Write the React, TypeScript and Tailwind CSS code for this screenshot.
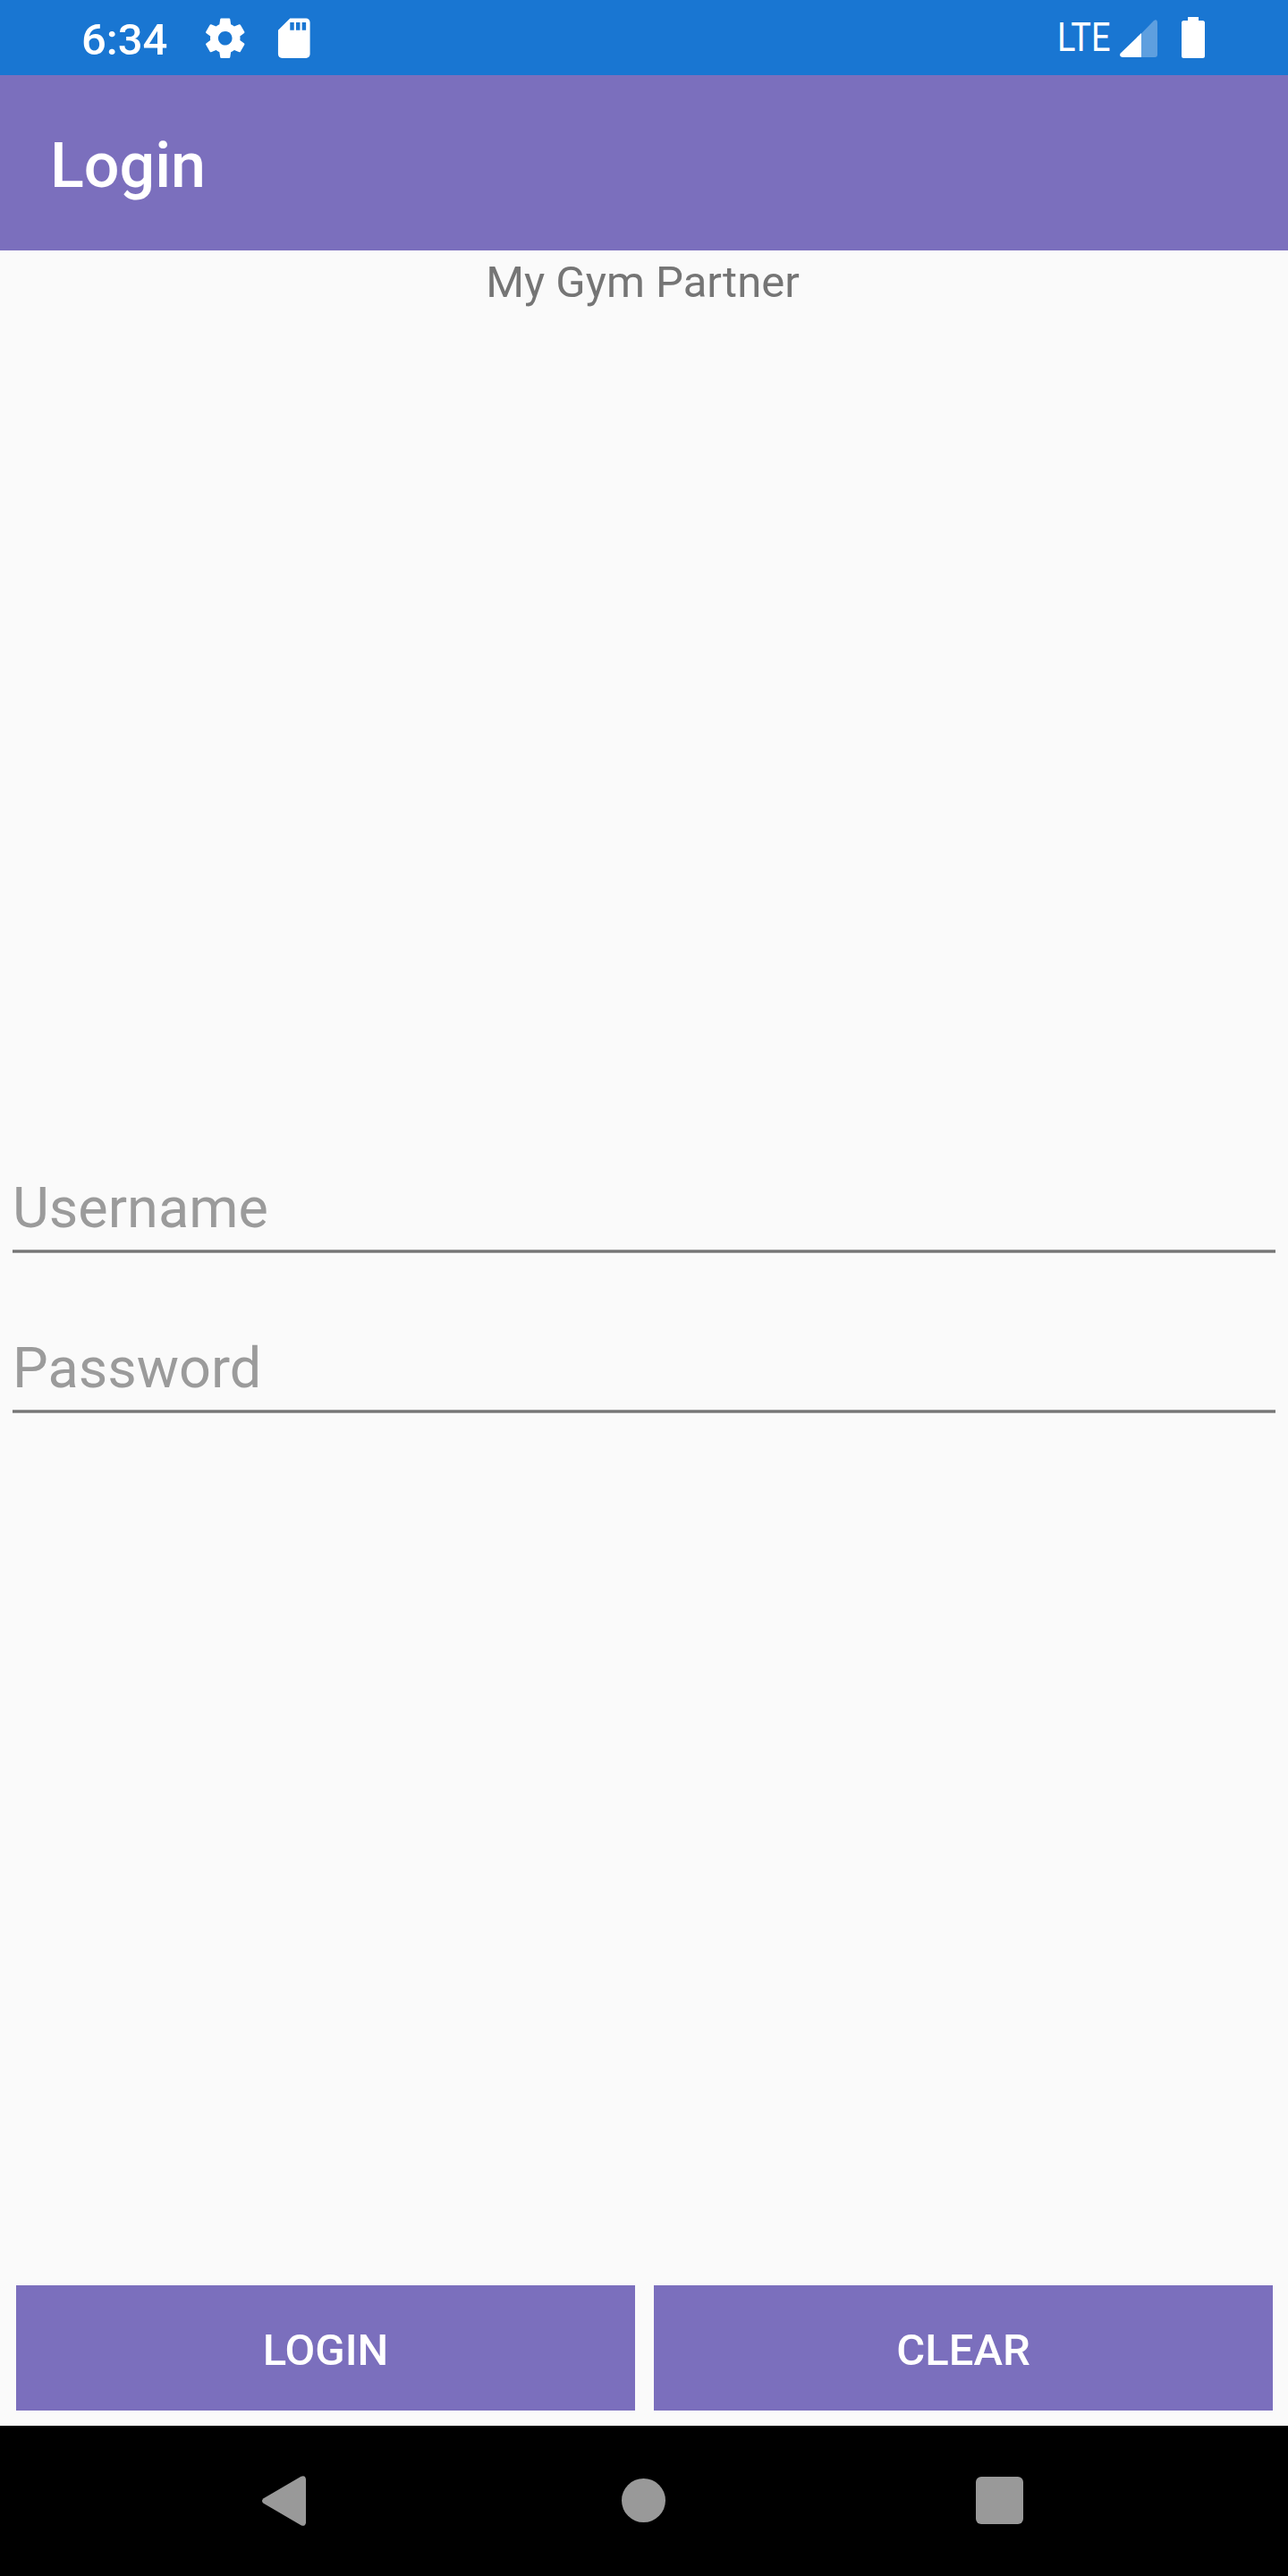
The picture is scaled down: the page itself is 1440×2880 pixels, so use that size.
import React from "react";

function StatusBar() {
  return (
    <div className="flex h-[84px] shrink-0 items-start bg-[#1976d2] text-white">
      <span className="ml-[91px] mt-[16px] w-[100px] whitespace-nowrap text-[49px] font-medium leading-[58px]">
        6:34
      </span>
      <svg className="ml-[33.5px] mt-[15.5px] h-[53.5px] w-[53.5px]" viewBox="0 0 24 24" fill="currentColor">
        <path d="M19.43 12.98c.04-.32.07-.64.07-.98s-.03-.66-.07-.98l2.11-1.65c.19-.15.24-.42.12-.64l-2-3.46c-.12-.22-.39-.3-.61-.22l-2.49 1c-.52-.4-1.08-.73-1.69-.98l-.38-2.65C14.46 2.18 14.25 2 14 2h-4c-.25 0-.46.18-.49.42l-.38 2.65c-.61.25-1.17.59-1.69.98l-2.49-1c-.23-.09-.49 0-.61.22l-2 3.46c-.13.22-.07.49.12.64l2.11 1.65c-.04.32-.07.65-.07.98s.03.66.07.98l-2.11 1.65c-.19.15-.24.42-.12.64l2 3.46c.12.22.39.3.61.22l2.49-1c.52.4 1.08.73 1.69.98l.38 2.65c.03.24.24.42.49.42h4c.25 0 .46-.18.49-.42l.38-2.65c.61-.25 1.17-.59 1.69-.98l2.49 1c.23.09.49 0 .61-.22l2-3.46c.12-.22.07-.49-.12-.64l-2.11-1.65zM12 15.5c-1.93 0-3.5-1.57-3.5-3.5s1.57-3.5 3.5-3.5 3.5 1.57 3.5 3.5-1.57 3.5-3.5 3.5z" />
      </svg>
      <svg className="ml-[23.5px] mt-[15.5px] h-[53.5px] w-[53.5px]" viewBox="0 0 24 24" fill="currentColor">
        <path d="M18 2h-8L4.02 8 4 20c0 1.1.9 2 2 2h12c1.1 0 2-.9 2-2V4c0-1.1-.9-2-2-2zm-6 6h-2V4h2v4zm3 0h-2V4h2v4zm3 0h-2V4h2v4z" />
      </svg>
      <div className="ml-auto mr-[93px] flex items-start">
        <span className="mt-[16px] w-[70px] origin-left scale-x-[0.86] whitespace-nowrap text-[44px] leading-[52px]">
          LTE
        </span>
        <svg className="mt-[22px] h-[42px] w-[42px]" viewBox="0 0 42 42" fill="currentColor">
          <path d="M24 15.5 37.8 1.2Q42-1.4 42 4V39Q42 42 39 42H24Z" opacity="0.3" />
          <path d="M24 15V42H3Q-1.4 41.2.8 37.6Z" />
        </svg>
        <svg className="ml-[27px] mt-[19px] h-[46px] w-[26px]" viewBox="0 0 26 46" fill="currentColor">
          <path d="M7 0H19V4H23.5Q26 4 26 6.5V43.5Q26 46 23.5 46H2.5Q0 46 0 43.5V6.5Q0 4 2.5 4H7Z" />
        </svg>
      </div>
    </div>
  );
}

function Field({ label, type }: { label: string; type: string }) {
  return (
    <div className="flex h-[179px] flex-col justify-end px-[14px]">
      <input
        type={type}
        placeholder={label}
        aria-label={label}
        className="mb-[9px] block h-[74px] w-full bg-transparent p-0 text-[63px] leading-[74px] outline-none placeholder:text-[#9b9b9b]"
      />
      <div className="h-[4px] border-y border-[#9d9d9d] bg-[#757575]" />
    </div>
  );
}

function ActionButton({ children }: { children: React.ReactNode }) {
  return (
    <button className="h-[140px] w-[692px] bg-[#7b6fbd] pt-[5px] text-[49px] font-medium leading-[58px] text-white">
      {children}
    </button>
  );
}

function NavigationBar() {
  return (
    <nav className="flex h-[168px] shrink-0 items-start bg-black text-[#999999]">
      <svg className="ml-[293px] mt-[56px] h-[56px] w-[49px]" viewBox="0 0 49 56" fill="currentColor">
        <path d="M1.6 25.2 43.5.7Q48.2-1.2 49 3.5V52.5Q48.2 57.2 43.5 55.3L1.6 30.8Q-1.6 28 1.6 25.2Z" />
      </svg>
      <div className="ml-[353px] mt-[59px] h-[49px] w-[49px] rounded-full bg-current" />
      <div className="ml-[347px] mt-[57px] h-[53px] w-[53px] rounded-[6px] bg-current" />
    </nav>
  );
}

export default function App() {
  return (
    <div className="flex h-[2880px] w-[1440px] flex-col overflow-hidden bg-[#fafafa] font-['Roboto',sans-serif]">
      <StatusBar />
      <header className="flex h-[196px] shrink-0 items-center bg-[#7b6fbd] pl-[56px]">
        <h1 className="mt-[6px] text-[70px] font-medium leading-[82px] text-white">Login</h1>
      </header>
      <main className="flex flex-1 flex-col">
        <p className="pr-[3px] pt-[7px] text-center text-[49px] leading-[58px] text-[#757575]">My Gym Partner</p>
        <form className="mt-[877px] flex flex-1 flex-col" onSubmit={(e) => e.preventDefault()}>
          <Field label="Username" type="text" />
          <Field label="Password" type="password" />
          <div className="mb-[17px] mt-auto flex gap-[21px] pl-[18px]">
            <ActionButton>LOGIN</ActionButton>
            <ActionButton>CLEAR</ActionButton>
          </div>
        </form>
      </main>
      <NavigationBar />
    </div>
  );
}
